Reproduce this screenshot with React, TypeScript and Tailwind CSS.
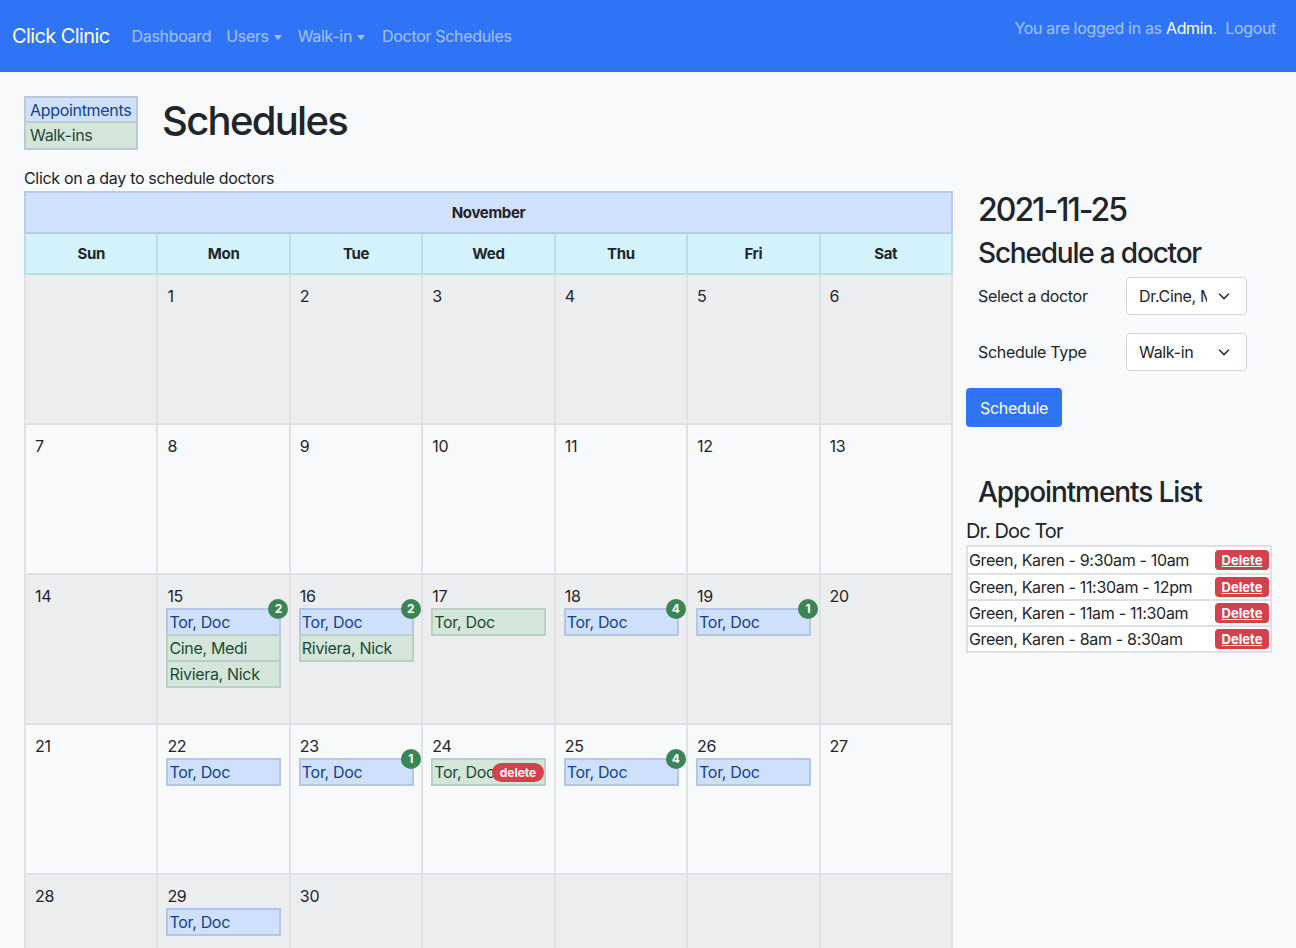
import React from 'react';

type Ev = { name: string; kind: 'appt' | 'walk'; badge?: number; del?: boolean };

const events: Record<number, Ev[]> = {
  15: [
    { name: 'Tor, Doc', kind: 'appt', badge: 2 },
    { name: 'Cine, Medi', kind: 'walk' },
    { name: 'Riviera, Nick', kind: 'walk' },
  ],
  16: [
    { name: 'Tor, Doc', kind: 'appt', badge: 2 },
    { name: 'Riviera, Nick', kind: 'walk' },
  ],
  17: [{ name: 'Tor, Doc', kind: 'walk' }],
  18: [{ name: 'Tor, Doc', kind: 'appt', badge: 4 }],
  19: [{ name: 'Tor, Doc', kind: 'appt', badge: 1 }],
  22: [{ name: 'Tor, Doc', kind: 'appt' }],
  23: [{ name: 'Tor, Doc', kind: 'appt', badge: 1 }],
  24: [{ name: 'Tor, Doc', kind: 'walk', del: true }],
  25: [{ name: 'Tor, Doc', kind: 'appt', badge: 4 }],
  26: [{ name: 'Tor, Doc', kind: 'appt' }],
  29: [{ name: 'Tor, Doc', kind: 'appt' }],
};

const weeks: (number | null)[][] = [
  [null, 1, 2, 3, 4, 5, 6],
  [7, 8, 9, 10, 11, 12, 13],
  [14, 15, 16, 17, 18, 19, 20],
  [21, 22, 23, 24, 25, 26, 27],
  [28, 29, 30, null, null, null, null],
];

const days = ['Sun', 'Mon', 'Tue', 'Wed', 'Thu', 'Fri', 'Sat'];

const appointments = [
  'Green, Karen - 9:30am - 10am',
  'Green, Karen - 11:30am - 12pm',
  'Green, Karen - 11am - 11:30am',
  'Green, Karen - 8am - 8:30am',
];

function Caret() {
  return (
    <span className="ml-[5px] inline-block align-middle border-t-[5px] border-x-[4px] border-x-transparent border-t-current" />
  );
}

function EventBox({ ev, first }: { ev: Ev; first: boolean }) {
  const tone =
    ev.kind === 'appt'
      ? 'bg-[#cfe0fc] border-[#b5c6e4] text-[#14428f]'
      : 'bg-[#d4e6dc] border-[#bccfc4] text-[#1c4a31]';
  return (
    <div className={`relative w-[115px] h-[28px] border-2 px-[1px] leading-[24px] whitespace-nowrap ${tone} ${first ? '' : '-mt-[2px]'}`}>
      {ev.name}
      {ev.badge !== undefined && (
        <span className="absolute -top-[11px] -right-[9px] w-[20px] h-[20px] rounded-full bg-[#3b8456] text-white text-[12px] font-bold leading-[20px] text-center tracking-normal">
          {ev.badge}
        </span>
      )}
      {ev.del && (
        <span className="absolute right-0 top-[3px] h-[19px] px-[8px] rounded-full bg-[#d1424c] text-white text-[12px] font-bold leading-[19px] tracking-normal">
          delete
        </span>
      )}
    </div>
  );
}

function Select({ value }: { value: string }) {
  return (
    <div className="w-[121px] h-[38px] bg-white border border-[#ced4da] rounded-[4px] flex items-center pl-[12px] pr-[15px]">
      <span className="w-[68px] overflow-hidden whitespace-nowrap text-[16px] text-[#212529]">{value}</span>
      <span className="flex-1" />
      <svg width="14" height="14" viewBox="0 0 16 16" fill="none" stroke="#343a40" strokeWidth="2" strokeLinecap="round" strokeLinejoin="round">
        <path d="M3 6l5 5 5-5" />
      </svg>
    </div>
  );
}

export default function App() {
  return (
    <div className="min-h-screen bg-[#f8f9fa] text-[#212529] font-['Inter',sans-serif] text-[16px] tracking-[-0.02em] overflow-hidden">
      <nav className="h-[72px] bg-[#2f74f5] flex px-[12px]">
        <div className="flex items-center flex-1">
          <span className="text-white text-[20px] mr-[14px] tracking-[-0.6px]">Click Clinic</span>
          <div className="flex text-white/55 text-[16px]">
            <span className="px-[8px]">Dashboard</span>
            <span className="px-[7px]">Users<Caret /></span>
            <span className="px-[9px]">Walk-in<Caret /></span>
            <span className="px-[8px]">Doctor Schedules</span>
          </div>
        </div>
        <div className="pt-[16px] pr-[8px] text-white/55 text-[16px]">
          You are logged in as <span className="text-white">Admin</span>.&nbsp;&nbsp;Logout
        </div>
      </nav>

      <div className="px-[24px] pt-[24px]">
        <div className="flex items-center h-[54px]">
          <div className="w-[114px] border-2 border-[#bfc9d6]">
            <div className="h-[25px] bg-[#cfe0fc] text-[#14428f] leading-[25px] px-[4px] border-b-2 border-[#bfcfc6]">Appointments</div>
            <div className="h-[25px] bg-[#d4e6dc] text-[#1c4a31] leading-[25px] px-[4px]">Walk-ins</div>
          </div>
          <h1 className="ml-[24px] -mt-[4px] text-[40px] font-medium leading-[48px] tracking-[-1.7px]">Schedules</h1>
        </div>
        <p className="mt-[16px] leading-[24px]">Click on a day to schedule doctors</p>

        <div className="flex mt-[1px]">
          <table className="w-[929px] table-fixed border-collapse shrink-0">
            <thead>
              <tr>
                <th colSpan={7} className="h-[41px] pt-[2px] bg-[#d1e0fb] border-2 border-[#bbcbe6] font-bold text-[15px]">November</th>
              </tr>
              <tr>
                {days.map((d) => (
                  <th key={d} className="h-[41px] pt-[2px] bg-[#d3f2fb] border-2 border-[#bddce3] font-bold text-[15px]">{d}</th>
                ))}
              </tr>
            </thead>
            <tbody>
              {weeks.map((w, i) => (
                <tr key={i} className={i % 2 === 0 ? 'bg-[#ecedef]' : 'bg-[#f8f9fa]'}>
                  {w.map((d, j) => (
                    <td key={j} className="h-[150px] border-2 border-[#dfe1e5] align-top pt-[9px] px-[8px]">
                      {d !== null && (
                        <>
                          <div className="leading-[24px] pl-[1px]">{d}</div>
                          {(events[d] || []).map((ev, k) => (
                            <EventBox key={k} ev={ev} first={k === 0} />
                          ))}
                        </>
                      )}
                    </td>
                  ))}
                </tr>
              ))}
            </tbody>
          </table>

          <div className="ml-[13px] w-[306px] shrink-0">
            <h2 className="pl-[12px] text-[32px] font-medium leading-[38px] tracking-[-2px]">2021-11-25</h2>
            <h3 className="pl-[12px] mt-[7px] text-[28px] font-medium leading-[34px] tracking-[-1.2px]">Schedule a doctor</h3>
            <div className="mt-[7px] pl-[12px] flex items-center">
              <span className="w-[148px]">Select a doctor</span>
              <Select value="Dr.Cine, Medi" />
            </div>
            <div className="mt-[18px] pl-[12px] flex items-center">
              <span className="w-[148px]">Schedule Type</span>
              <Select value="Walk-in" />
            </div>
            <button className="mt-[17px] h-[39px] px-[14px] rounded-[4px] bg-[#2f74f5] text-white text-[16px]">Schedule</button>

            <h3 className="mt-[48px] pl-[12px] text-[28px] font-medium leading-[34px] tracking-[-1.1px]">Appointments List</h3>
            <div className="mt-[10px] text-[20px] leading-[24px] tracking-[-0.9px]">Dr. Doc Tor</div>
            <div className="mt-[2px] w-[306px] border-2 border-[#dee0e3] bg-white">
              {appointments.map((a, i) => (
                <div key={i} className={`h-[26px] flex items-center justify-between pl-[1px] pr-[1px] ${i > 0 ? 'border-t-2 border-[#dee0e3]' : ''}`}>
                  <span>{a}</span>
                  <span className="w-[54px] h-[20px] rounded-[4px] bg-[#d1424c] text-white text-[13px] font-bold underline leading-[20px] text-center tracking-normal">Delete</span>
                </div>
              ))}
            </div>
          </div>
        </div>
      </div>
    </div>
  );
}
